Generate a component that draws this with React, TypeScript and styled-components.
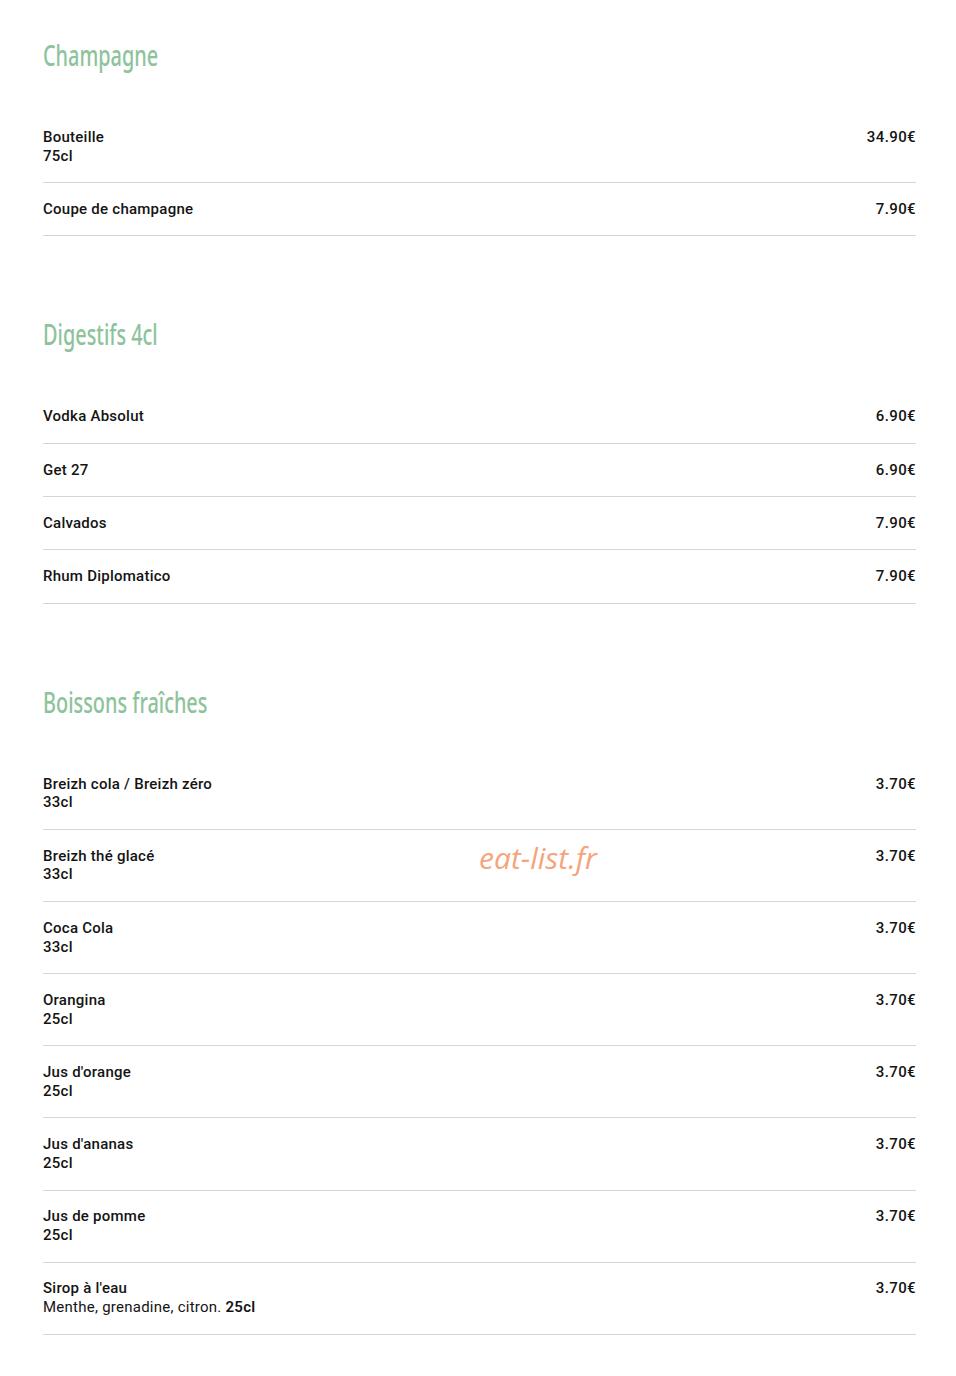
import React from 'react';
import styled, { createGlobalStyle } from 'styled-components';

type Item = {
  name: string;
  price: string;
  size?: string;
  note?: string;
};

type Section = {
  title: string;
  items: Item[];
};

const sections: Section[] = [
  {
    title: 'Champagne',
    items: [
      { name: 'Bouteille', size: '75cl', price: '34.90€' },
      { name: 'Coupe de champagne', price: '7.90€' },
    ],
  },
  {
    title: 'Digestifs 4cl',
    items: [
      { name: 'Vodka Absolut', price: '6.90€' },
      { name: 'Get 27', price: '6.90€' },
      { name: 'Calvados', price: '7.90€' },
      { name: 'Rhum Diplomatico', price: '7.90€' },
    ],
  },
  {
    title: 'Boissons fraîches',
    items: [
      { name: 'Breizh cola / Breizh zéro', size: '33cl', price: '3.70€' },
      { name: 'Breizh thé glacé', size: '33cl', price: '3.70€' },
      { name: 'Coca Cola', size: '33cl', price: '3.70€' },
      { name: 'Orangina', size: '25cl', price: '3.70€' },
      { name: "Jus d'orange", size: '25cl', price: '3.70€' },
      { name: "Jus d'ananas", size: '25cl', price: '3.70€' },
      { name: 'Jus de pomme', size: '25cl', price: '3.70€' },
      {
        name: "Sirop à l'eau",
        note: 'Menthe, grenadine, citron.',
        size: '25cl',
        price: '3.70€',
      },
    ],
  },
];

const GlobalStyle = createGlobalStyle`
  html, body {
    margin: 0;
    padding: 0;
    background: #ffffff;
  }
  body {
    font-family: Roboto, 'Liberation Sans', sans-serif;
    color: #1a1a1a;
  }
`;

const Page = styled.main`
  position: relative;
  display: flex;
  flex-direction: column;
  gap: 78px;
  padding: 35px 40px 40px 43px;
`;

const MenuSection = styled.section`
  display: flex;
  flex-direction: column;
`;

const Title = styled.h2`
  margin: 0 0 36px;
  font-family: 'Noto Sans', 'DejaVu Sans', sans-serif;
  font-weight: 500;
  font-size: 28px;
  line-height: 40px;
  color: #8dc39b;
`;

// the reference heading face is a tall condensed one, squeeze it horizontally
const TitleText = styled.span`
  display: inline-block;
  transform: scaleX(0.71);
  transform-origin: left center;
  white-space: nowrap;
`;

const List = styled.ul`
  list-style: none;
  margin: 0;
  padding: 0;
`;

const Row = styled.li`
  display: flex;
  justify-content: space-between;
  align-items: flex-start;
  gap: 24px;
  padding: 16.77px 0;
  border-bottom: 1px solid #d6d6d6;
  font-size: 15px;
  line-height: 18.8px;
`;

const Info = styled.div`
  display: flex;
  flex-direction: column;
  letter-spacing: 0.25px;
`;

const Name = styled.span`
  font-weight: 500;
  color: #141414;
`;

const Detail = styled.span<{ $plain?: boolean }>`
  font-weight: ${({ $plain }) => ($plain ? 400 : 500)};
  color: #141414;

  b {
    font-weight: 600;
  }
`;

const Price = styled.span`
  font-weight: 500;
  letter-spacing: 0.4px;
  color: #141414;
  white-space: nowrap;
`;

const Watermark = styled.div`
  position: absolute;
  top: 838px;
  left: 479px;
  font-family: 'Open Sans', 'Noto Sans', sans-serif;
  font-style: italic;
  font-size: 30px;
  line-height: 40px;
  color: #f4a57c;
  pointer-events: none;
`;

const MenuRow = ({ item }: { item: Item }) => (
  <Row>
    <Info>
      <Name>{item.name}</Name>
      {item.note ? (
        <Detail $plain>
          {item.note} <b>{item.size}</b>
        </Detail>
      ) : (
        item.size && <Detail>{item.size}</Detail>
      )}
    </Info>
    <Price>{item.price}</Price>
  </Row>
);

export default function App() {
  return (
    <>
      <GlobalStyle />
      <Page>
        {sections.map((section) => (
          <MenuSection key={section.title}>
            <Title>
              <TitleText>{section.title}</TitleText>
            </Title>
            <List>
              {section.items.map((item) => (
                <MenuRow key={item.name} item={item} />
              ))}
            </List>
          </MenuSection>
        ))}
        <Watermark>eat-list.fr</Watermark>
      </Page>
    </>
  );
}
